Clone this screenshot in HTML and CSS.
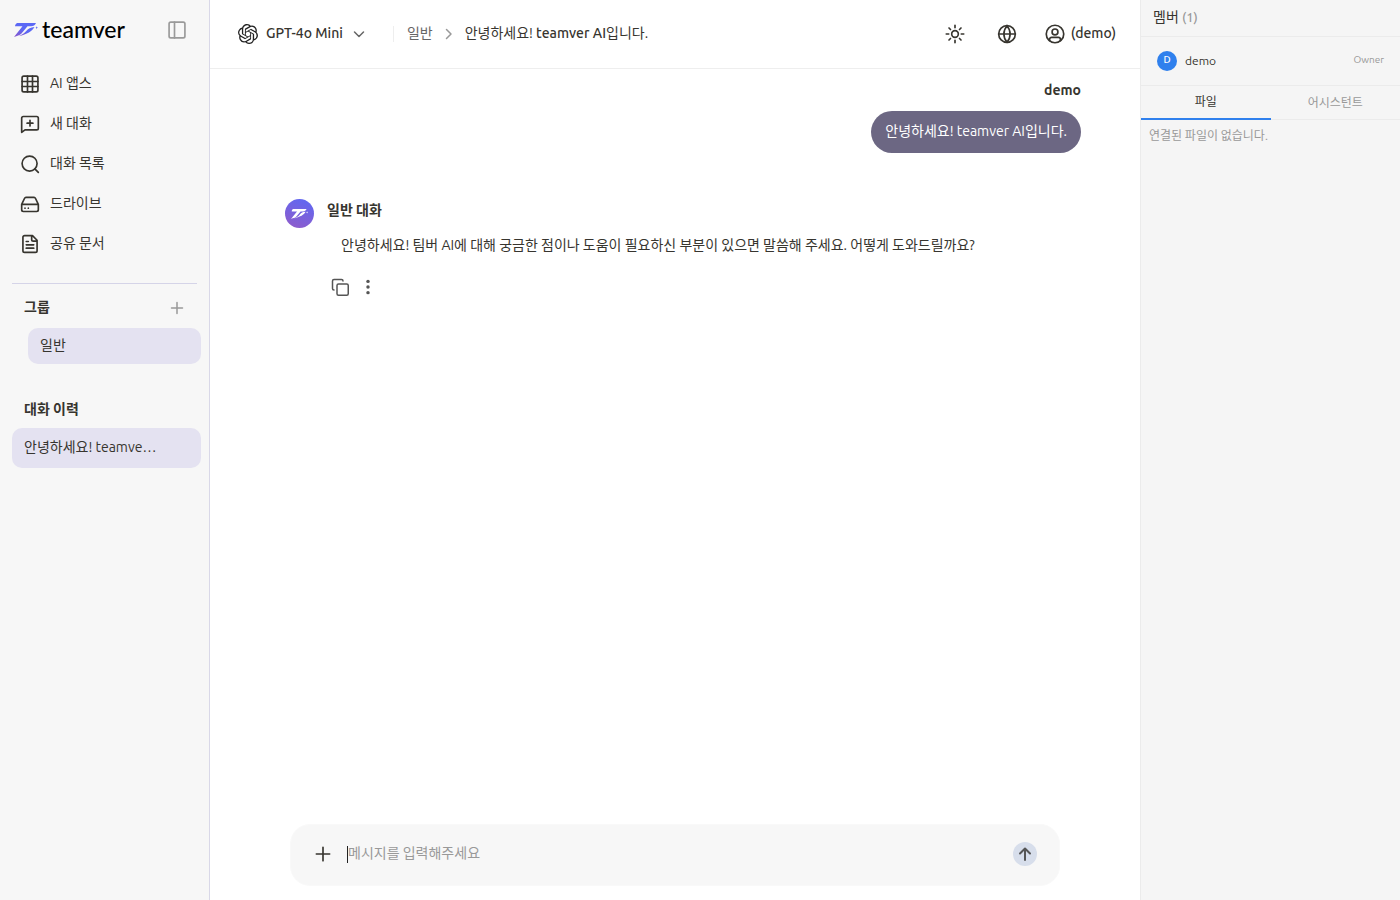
FILE: index.html
```html
<!DOCTYPE html>
<html lang="ko">
<head>
<meta charset="utf-8">
<title>teamver</title>
<link rel="stylesheet" href="styles.css">
</head>
<body>
<svg class="defs" width="0" height="0" aria-hidden="true">
  <defs>
    <linearGradient id="brand" x1="0" y1="1" x2="1" y2="0"><stop offset="0" stop-color="#8b55c8"/><stop offset="0.5" stop-color="#5b68f5"/><stop offset="1" stop-color="#5b68f5"/></linearGradient>
    <symbol id="wing" viewBox="0 0 24 14">
      <path d="M3.2 0H22C21 2.4 19.500 3.300 17 3.300H13.500L7.500 10.500C5.500 12.800 3.200 12.500 0 14L8.500 3.300H1C1.200 1.500 2 .5 3.200 0Z"/>
      <path d="M20.500 3.900C18 8.500 13.500 10.800 4.500 13.200C8.500 11.500 10.500 10.300 12 8.300C14.200 5.400 16.500 4.200 20.500 3.900Z"/>
      <path d="M22.700 3.200L23.100 4.300L24 4.700L23.100 5.100L22.700 6.200L22.300 5.100L21.400 4.700L22.300 4.300Z"/>
    </symbol>
  </defs>
</svg>
<div class="app">
  <aside class="sidebar">
    <div class="brand">
      <a class="logo" href="#"><svg class="logo-mark" viewBox="0 0 24 14" fill="url(#brand)"><use href="#wing"/></svg><span>teamver</span></a>
      <button class="icon-btn muted" aria-label="사이드바"><svg class="icon" viewBox="0 0 24 24"><rect x="2.500" y="2.500" width="19" height="19" rx="2"/><path d="M9 2.500v19"/></svg></button>
    </div>
    <nav class="menu">
      <a href="#"><svg class="icon" viewBox="0 0 24 24"><rect x="2.500" y="2.500" width="19" height="19" rx="2"/><path d="M2.500 9h19M2.500 15h19M9 2.500v19M15 2.500v19"/></svg><span class="label">AI 앱스</span></a>
      <a href="#"><svg class="icon" viewBox="0 0 24 24"><path d="M2 22V5a2 2 0 0 1 2-2h16a2 2 0 0 1 2 2v12a2 2 0 0 1-2 2H6l-4 3M12 7.500v7M8.500 11h7"/></svg><span class="label">새 대화</span></a>
      <a href="#"><svg class="icon" viewBox="0 0 24 24"><circle cx="11.500" cy="11.500" r="9"/><path d="M22 22l-4.200-4.200"/></svg><span class="label">대화 목록</span></a>
      <a href="#"><svg class="icon" viewBox="0 0 24 24"><path d="M22 12.500H2M5.500 5.100L2 12.500V19a2 2 0 0 0 2 2h16a2 2 0 0 0 2-2v-6.500l-3.500-7.400A2 2 0 0 0 16.800 4H7.200a2 2 0 0 0-1.700 1.100zM6 17h.01M10 17h.01"/></svg><span class="label">드라이브</span></a>
      <a href="#"><svg class="icon" viewBox="0 0 24 24"><path d="M15 2H5.500a2 2 0 0 0-2 2v16a2 2 0 0 0 2 2h13a2 2 0 0 0 2-2V7.500zM14 2v4.500a2 2 0 0 0 2 2h4.500M10 9H7.500M16.500 13h-9M16.500 17h-9"/></svg><span class="label">공유 문서</span></a>
    </nav>
    <section class="groups">
      <div class="section-head"><h2>그룹</h2><button class="icon-btn faint" aria-label="그룹 추가"><svg class="icon small" viewBox="0 0 16 16"><path d="M8 2.500v11M2.500 8h11"/></svg></button></div>
      <a class="pill group" href="#">일반</a>
    </section>
    <section class="history">
      <h2>대화 이력</h2>
      <a class="pill chat" href="#">안녕하세요! teamve…</a>
    </section>
  </aside>

  <main class="main">
    <header class="topbar">
      <button class="model">
        <svg class="gpt" viewBox="0 0 24 24"><path d="M22.280 9.820a5.980 5.980 0 0 0-.520-4.910 6.050 6.050 0 0 0-6.510-2.900A6.070 6.070 0 0 0 4.980 4.180a5.980 5.980 0 0 0-4 2.900 6.050 6.050 0 0 0 .740 7.100 5.980 5.980 0 0 0 .510 4.910 6.050 6.050 0 0 0 6.510 2.900A5.980 5.980 0 0 0 13.260 24a6.060 6.060 0 0 0 5.770-4.210 5.990 5.990 0 0 0 4-2.900 6.060 6.060 0 0 0-.750-7.070zM13.260 22.430a4.480 4.480 0 0 1-2.880-1.040l.140-.080 4.780-2.760a.8.8 0 0 0 .390-.680v-6.740l2.020 1.170a.07.07 0 0 1 .04.050v5.580a4.500 4.500 0 0 1-4.490 4.500zM3.600 18.300a4.470 4.470 0 0 1-.530-3.010l.140.090 4.780 2.760a.77.77 0 0 0 .780 0l5.840-3.370v2.330a.08.08 0 0 1-.03.060L9.740 19.950a4.500 4.500 0 0 1-6.140-1.650zM2.340 7.900a4.490 4.490 0 0 1 2.370-1.970V11.600a.77.77 0 0 0 .390.680l5.810 3.350-2.020 1.170a.08.08 0 0 1-.070 0l-4.830-2.790A4.500 4.500 0 0 1 2.340 7.870zm16.600 3.860L13.100 8.360 15.120 7.200a.08.08 0 0 1 .070 0l4.830 2.790a4.490 4.490 0 0 1-.680 8.100v-5.680a.79.79 0 0 0-.400-.650zm2.010-3.020l-.140-.090-4.770-2.780a.78.78 0 0 0-.790 0L9.410 9.230V6.900a.07.07 0 0 1 .03-.060l4.830-2.790a4.500 4.500 0 0 1 6.680 4.660zM8.310 12.860l-2.020-1.160a.08.08 0 0 1-.04-.060V6.070a4.500 4.500 0 0 1 7.380-3.450l-.140.080-4.780 2.760a.8.8 0 0 0-.390.680zm1.090-2.360L12 9l2.610 1.500v3L12 15l-2.610-1.500z"/></svg>
        <span class="label">GPT-4o Mini</span>
        <svg class="icon small grey" viewBox="0 0 16 16"><path d="M3.500 6L8 10.500L12.500 6"/></svg>
      </button>
      <nav class="crumbs"><a class="label" href="#">일반</a><svg class="icon small faint" viewBox="0 0 16 16"><path d="M5.500 3.500L10 8L5.500 12.500"/></svg><span class="label">안녕하세요! <span class="product">teamver AI</span>입니다.</span></nav>
      <div class="actions">
        <button class="icon-btn" aria-label="테마"><svg class="icon" viewBox="0 0 24 24"><circle cx="12" cy="12" r="4"/><path d="M12 1.500v3M12 19.500v3M1.500 12h3M19.500 12h3M4.800 4.800l1.800 1.800M17.400 17.400l1.800 1.800M4.800 19.200l1.800-1.800M17.400 6.600l1.800-1.800"/></svg></button>
        <button class="icon-btn" aria-label="언어"><svg class="icon" viewBox="0 0 24 24"><circle cx="12" cy="12" r="10"/><path d="M2 12h20M12 2c-5 6-5 14 0 20c5-6 5-14 0-20"/></svg></button>
        <button class="user"><svg class="icon" viewBox="0 0 24 24"><circle cx="12" cy="12" r="10.500"/><circle cx="12" cy="9.500" r="3.500"/><path d="M5.500 20v-1.500a2.500 2.500 0 0 1 2.500-2.500h8a2.500 2.500 0 0 1 2.500 2.500V20"/></svg><span class="label">(demo)</span></button>
      </div>
    </header>

    <div class="thread">
      <article class="mine">
        <h3>demo</h3>
        <p class="bubble">안녕하세요! teamver AI입니다.</p>
      </article>
      <article class="reply">
        <span class="avatar"><svg viewBox="0 0 24 14" fill="#fff"><use href="#wing"/></svg></span>
        <div class="reply-body">
          <h3>일반 대화</h3>
          <p>안녕하세요! 팀버 AI에 대해 궁금한 점이나 도움이 필요하신 부분이 있으면 말씀해 주세요. 어떻게 도와드릴까요?</p>
          <div class="tools">
            <button class="icon-btn" aria-label="복사"><svg class="icon" viewBox="0 0 24 24"><rect x="8" y="8" width="15" height="15" rx="2"/><path d="M4 16a2 2 0 0 1-2-2V4a2 2 0 0 1 2-2h10a2 2 0 0 1 2 2"/></svg></button>
            <button class="icon-btn" aria-label="더보기"><svg class="icon dots" viewBox="0 0 24 24"><circle cx="12" cy="4.500" r="2.300"/><circle cx="12" cy="12" r="2.300"/><circle cx="12" cy="19.500" r="2.300"/></svg></button>
          </div>
        </div>
      </article>
    </div>

    <form class="composer">
      <button type="button" class="icon-btn" aria-label="첨부"><svg class="icon" viewBox="0 0 24 24"><path d="M12 4v16M4 12h16"/></svg></button>
      <input type="text" aria-label="메시지" placeholder="메시지를 입력해주세요">
      <button type="button" class="send" aria-label="보내기"><svg class="icon small" viewBox="0 0 16 16"><path d="M8 14V2.500M3 7.500L8 2.500L13 7.500"/></svg></button>
    </form>
  </main>

  <aside class="panel">
    <h2>멤버 <span>(1)</span></h2>
    <div class="member"><span class="initial">D</span><span class="name">demo</span><span class="role">Owner</span></div>
    <div class="tabs" role="tablist">
      <button role="tab" aria-selected="true" class="active">파일</button>
      <button role="tab" aria-selected="false">어시스턴트</button>
    </div>
    <p class="empty">연결된 파일이 없습니다.</p>
  </aside>
</div>
</body>
</html>
```
FILE: styles.css
```css
* { box-sizing: border-box; }
body, h2, h3, p { margin: 0; }
body {
  font: 14px/21px Ubuntu, "Open Sans", "Noto Sans CJK KR", sans-serif;
  color: #37352f;
  background: #fff;
}
a { color: inherit; text-decoration: none; }
button { font: inherit; color: inherit; background: none; border: 0; padding: 0; display: flex; align-items: center; }
h2, h3 { font-size: 14px; font-weight: 700; line-height: 20px; }
.defs { position: absolute; }
.label { padding-bottom: 2px; }
.icon { width: 20px; height: 20px; flex: none; fill: none; stroke: currentColor; stroke-width: 2; stroke-linecap: round; stroke-linejoin: round; }
.icon.small { width: 16px; height: 16px; stroke-width: 1.5; }
.app { display: flex; min-height: 100vh; }

.sidebar { width: 210px; flex: none; background: #f7f7f7; border-right: 1px solid #d9d8e8; }
.brand { display: flex; justify-content: space-between; align-items: center; padding: 0 22px 0 14px; height: 60px; }
.logo { display: flex; align-items: center; gap: 4px; font: 500 23px/26px Lato, sans-serif; color: #000; }
.logo span { padding-bottom: 2px; }
.logo-mark { width: 24px; height: 14px; }
.muted { color: #9a9a9a; }
.faint { color: #999; }
.grey { color: #666; }
.menu { display: flex; flex-direction: column; margin: 4px 12px 0; padding-bottom: 19px; border-bottom: 1px solid #d5d4e8; }
.menu a { display: flex; align-items: center; gap: 10px; height: 40px; padding-left: 8px; }
.section-head { display: flex; justify-content: space-between; padding: 13px 24px 0; }
.section-head button { padding-top: 2px; }
.pill { display: flex; align-items: center; padding: 0 12px 2px; margin-right: 8px; background: #e4e2f1; border-radius: 10px; }
.group { height: 36px; margin-top: 11px; margin-left: 28px; }
.history { margin-top: 35px; }
.history h2 { padding-left: 24px; }
.chat { height: 40px; margin-top: 9px; margin-left: 12px; }

.main { flex: 1; min-width: 0; display: flex; flex-direction: column; }
.topbar { display: flex; align-items: center; height: 69px; padding: 0 24px 0 28px; border-bottom: 1px solid #eee; font-weight: 500; }
.model { gap: 8px; }
.gpt { width: 20px; height: 20px; fill: #222; }
.crumbs { display: flex; align-items: center; gap: 8px; margin-left: 26px; padding-left: 14px; background: linear-gradient(#eee, #eee) left center / 1px 16px no-repeat; font-weight: 400; }
.crumbs a { color: #666; }
.product { font-weight: 500; }
.actions { display: flex; align-items: center; margin-left: auto; gap: 32px; }
.user { gap: 6px; margin-left: -4px; }

.thread { flex: 1; padding: 11px 59px 0 75px; }
.mine { display: flex; flex-direction: column; align-items: flex-end; }
.bubble { margin-top: 11px; padding: 10px 14px 11px; color: #fff; background: #6c6783; border-radius: 21px; }
.reply { display: flex; gap: 13px; margin-top: 46px; }
.avatar { width: 29px; height: 29px; flex: none; display: grid; place-items: center; border-radius: 50%; background: linear-gradient(20deg, #925bc8, #5b68f5); }
.avatar svg { width: 17px; height: 10px; }
.reply-body h3 { margin-top: 1px; }
.reply-body p { margin: 15px 0 0 14px; }
.tools { display: flex; gap: 10px; margin: 22px 0 0 4px; color: #555; }
.tools .icon { width: 18px; height: 18px; }
.dots { fill: currentColor; stroke: none; }

.composer { display: flex; align-items: center; margin: 0 80px 14px; height: 62px; padding: 0 22px 2px; background: #f7f7f7; border: 1px solid #f9f9f9; border-radius: 20px; }
.composer input { flex: 1; min-width: 0; height: 17px; margin: 0 12px 0 14px; padding: 0 0 2px; border: 0; border-left: 1px solid #222; outline: 0; background: none; font: inherit; }
.composer input::placeholder { color: #999; opacity: 1; }
.send { width: 24px; height: 24px; justify-content: center; border-radius: 50%; background: #d7deeb; color: #555; }
.send .icon { stroke-width: 2; }

.panel { width: 260px; flex: none; background: #f5f5f5; border-left: 1px solid #ebebeb; }
.panel h2 { padding: 7px 12px 9px; border-bottom: 1px solid #ebebeb; font-weight: 400; }
.panel h2 span { color: #999; font-size: 13px; font-weight: 500; }
.member { display: flex; align-items: center; gap: 8px; height: 48px; padding: 0 16px; font-size: 12px; line-height: 16px; color: #37352f; }
.initial { width: 20px; height: 20px; border-radius: 50%; background: #2f80ed; color: #fff; font-size: 10px; font-weight: 500; line-height: 18px; text-align: center; }
.role { margin-left: auto; padding-bottom: 2px; color: #999; font-size: 10px; }
.tabs { display: flex; border-top: 1px solid #ebebeb; border-bottom: 1px solid #ebebeb; font-size: 12px; line-height: 20px; }
.tabs button { flex: 1; justify-content: center; height: 33px; color: #999; }
.tabs .active { height: 34px; margin-bottom: -1px; padding-bottom: 2px; color: #37352f; box-shadow: inset 0 -2px #2f80ed; }
.empty { padding: 5px 8px; color: #999; font-size: 12px; }
```
